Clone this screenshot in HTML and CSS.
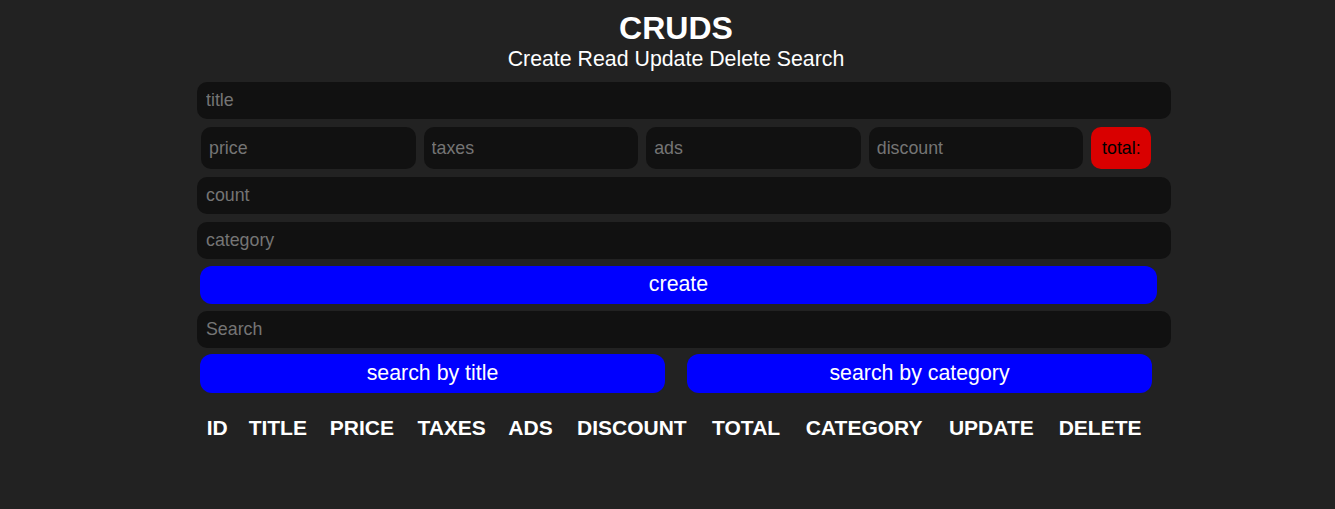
FILE: index.html
```html
<!DOCTYPE html>
<html>
<head>
<meta charset="utf-8">
<title>CRUDS</title>
<link rel="stylesheet" href="styles.css">
</head>
<body>
<div class="crud">
  <div class="head">
    <h2 class="head-title">CRUDS</h2>
    <p class="head-sub">Create Read Update Delete Search</p>
  </div>
  <div class="inputs">
    <input class="field" type="text" placeholder="title">
    <div class="price">
      <input class="field field-sm" type="number" placeholder="price">
      <input class="field field-sm" type="number" placeholder="taxes">
      <input class="field field-sm" type="number" placeholder="ads">
      <input class="field field-sm" type="number" placeholder="discount">
      <small class="total">total:</small>
    </div>
    <input class="field" type="number" placeholder="count">
    <input class="field" type="text" placeholder="category">
    <button class="btn btn-create">create</button>
  </div>
  <div class="outputs">
    <input class="field" type="text" placeholder="Search">
    <div class="btn-search">
      <button class="btn btn-half">search by title</button>
      <button class="btn btn-half">search by category</button>
    </div>
    <table class="table">
      <thead>
        <tr>
          <th>ID</th>
          <th>TITLE</th>
          <th>PRICE</th>
          <th>TAXES</th>
          <th>ADS</th>
          <th>DISCOUNT</th>
          <th>TOTAL</th>
          <th>CATEGORY</th>
          <th>UPDATE</th>
          <th>DELETE</th>
        </tr>
      </thead>
      <tbody></tbody>
    </table>
  </div>
</div>
</body>
</html>
```

FILE: styles.css
```css
* {
  box-sizing: border-box;
  margin: 0;
  padding: 0;
}

html, body {
  background: #222222;
}

body {
  color: #ffffff;
  font-family: "Liberation Sans", Arial, sans-serif;
  height: 509px;
  overflow: hidden;
}

.crud {
  width: 974px;
  margin-left: 197px;
}

.head {
  text-align: center;
  padding-top: 10px;
  padding-right: 16px;
  margin-bottom: 11px;
}

.head-title {
  font-size: 32px;
  font-weight: bold;
  line-height: 37px;
}

.head-sub {
  font-size: 21.33px;
  line-height: 24px;
}

.inputs,
.outputs {
  display: flex;
  flex-direction: column;
}

.field {
  display: block;
  width: 100%;
  height: 37px;
  border: none;
  outline: none;
  background: #111111;
  border-radius: 10px;
  padding: 0 9px;
  color: #ffffff;
  font-family: "Liberation Sans", Arial, sans-serif;
  font-size: 17.8px;
  margin-bottom: 8px;
}

.field::placeholder {
  color: #757575;
}

.price {
  display: flex;
  align-items: center;
  gap: 8px;
  padding-left: 4px;
  margin-bottom: 8px;
}

.field-sm {
  width: 214.6px;
  height: 42px;
  margin-bottom: 0;
  padding: 0 8px;
  flex: none;
}

.total {
  display: flex;
  align-items: center;
  justify-content: center;
  width: 60px;
  height: 42px;
  background: #d90000;
  color: #000000;
  border-radius: 10px;
  font-size: 17.8px;
}

.btn {
  display: block;
  border: none;
  background: #0000ff;
  color: #ffffff;
  border-radius: 12px;
  font-family: "Liberation Sans", Arial, sans-serif;
  font-size: 21.33px;
  cursor: pointer;
}

.btn-create {
  width: 957px;
  height: 38px;
  margin-left: 3px;
  margin-top: -1px;
  margin-bottom: 7px;
  padding-bottom: 1px;
}

.outputs .field {
  margin-bottom: 6px;
}

.btn-search {
  display: flex;
  gap: 22px;
  padding-left: 3px;
}

.btn-half {
  width: 465px;
  height: 39px;
}

.table {
  align-self: flex-start;
  width: 957px;
  margin-top: 23px;
  border-collapse: collapse;
}

.table th {
  font-size: 21px;
  font-weight: bold;
  line-height: 24px;
  padding: 0 8px;
  text-align: center;
}
```
